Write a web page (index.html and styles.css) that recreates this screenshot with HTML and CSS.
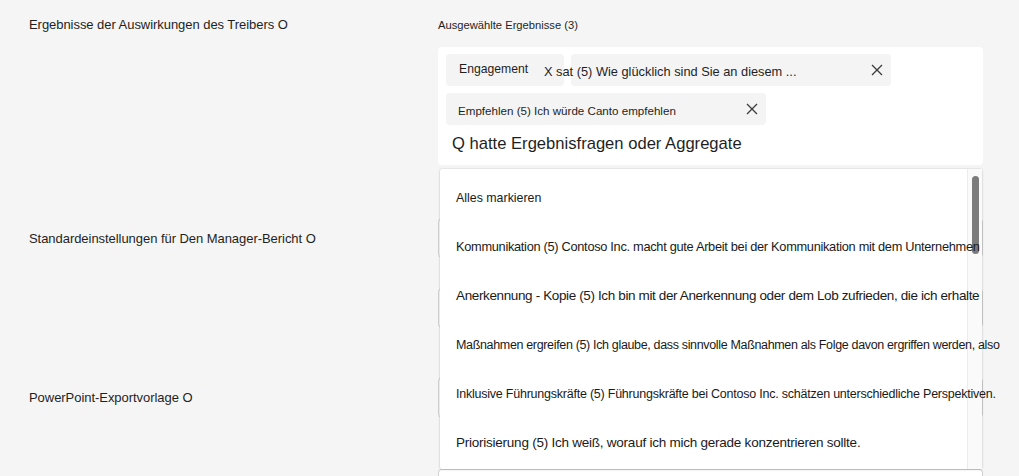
FILE: index.html
```html
<!DOCTYPE html>
<html lang="de">
<head>
<meta charset="utf-8">
<title>Einstellungen</title>
<link rel="stylesheet" href="styles.css">
</head>
<body>
<div class="page">
  <section class="row row-first">
    <div class="label label-top">Ergebnisse der Auswirkungen des Treibers O</div>
    <div class="control">
      <div class="small-label">Ausgewählte Ergebnisse (3)</div>
      <div class="combo">
        <div class="picker">
          <div class="chips">
            <div class="chip chip-short"><span class="chip-text">Engagement</span></div>
            <div class="chip chip-long">
              <span class="chip-text chip-text-shift">X sat (5) Wie glücklich sind Sie an diesem ...</span>
              <svg class="chip-x" viewBox="0 0 12 12" width="12" height="12"><path d="M1 1 L11 11 M11 1 L1 11"/></svg>
            </div>
            <div class="chip chip-mid">
              <span class="chip-text chip-text-small">Empfehlen (5) Ich würde Canto empfehlen</span>
              <svg class="chip-x" viewBox="0 0 12 12" width="12" height="12"><path d="M1 1 L11 11 M11 1 L1 11"/></svg>
            </div>
          </div>
          <div class="search">Q hatte Ergebnisfragen oder Aggregate</div>
        </div>
        <div class="dropdown">
          <div class="track"><div class="thumb"></div></div>
          <ul class="options">
            <li class="opt opt-a">Alles markieren</li>
            <li class="opt opt-b">Kommunikation (5) Contoso Inc. macht gute Arbeit bei der Kommunikation mit dem Unternehmen</li>
            <li class="opt opt-c">Anerkennung - Kopie (5) Ich bin mit der Anerkennung oder dem Lob zufrieden, die ich erhalte</li>
            <li class="opt opt-d">Maßnahmen ergreifen (5) Ich glaube, dass sinnvolle Maßnahmen als Folge davon ergriffen werden, also</li>
            <li class="opt opt-e">Inklusive Führungskräfte (5) Führungskräfte bei Contoso Inc. schätzen unterschiedliche Perspektiven.</li>
            <li class="opt opt-f">Priorisierung (5) Ich weiß, worauf ich mich gerade konzentrieren sollte.</li>
          </ul>
        </div>
      </div>
    </div>
  </section>

  <section class="row row-manager">
    <div class="label label-field">Standardeinstellungen für Den Manager-Bericht O</div>
    <div class="control fields">
      <div class="field"></div>
      <div class="field field-second"></div>
    </div>
  </section>

  <section class="row row-ppt">
    <div class="label label-field">PowerPoint-Exportvorlage O</div>
    <div class="control fields">
      <div class="field field-tall"></div>
    </div>
  </section>

  <section class="row row-last">
    <div class="label"></div>
    <div class="control fields">
      <div class="field field-cut"></div>
    </div>
  </section>
</div>
</body>
</html>
```

FILE: styles.css
```css
* { box-sizing: border-box; }

html, body {
  margin: 0;
  padding: 0;
  background: #f5f5f5;
  height: 100%;
  overflow: hidden;
}

body {
  font-family: "Liberation Sans", Arial, sans-serif;
  color: #1f1f1f;
}

.page {
  padding-left: 29px;
}

.row {
  display: flex;
  align-items: flex-start;
}

.label {
  width: 409px;
  flex: none;
  font-size: 13px;
  letter-spacing: -0.05px;
  line-height: 18px;
  color: #1f1f1f;
}

.control {
  width: 545px;
  flex: none;
}

/* first row */
.row-first {
  padding-top: 16px;
}

.small-label {
  font-size: 11.2px;
  line-height: 18px;
  margin-bottom: 13px;
}

.combo {
  position: relative;
}

.picker {
  background: #ffffff;
  border-radius: 4px;
  padding: 7px 7px 0 8px;
  height: 118px;
}

.chips {
  display: flex;
  flex-wrap: wrap;
  gap: 7px;
}

.chip {
  height: 32px;
  background: #f4f4f4;
  border-radius: 4px;
  display: flex;
  align-items: center;
  white-space: nowrap;
}

.chip-short {
  width: 118px;
  padding-left: 13px;
}

.chip-long {
  width: 320px;
  padding-right: 8px;
  justify-content: space-between;
}

.chip-mid {
  width: 320px;
  padding-left: 12px;
  padding-right: 8px;
  justify-content: space-between;
}

.chip-text {
  font-size: 12.2px;
  line-height: 16px;
  padding-bottom: 2px;
}

.chip-text-shift {
  font-size: 12.8px;
  margin-left: -27px;
  padding-bottom: 0;
  padding-top: 3px;
}

.chip-text-small {
  font-size: 11.6px;
  padding-top: 3px;
  padding-bottom: 0;
}

.chip-x {
  flex: none;
  fill: none;
  stroke: #3b3b3b;
  stroke-width: 1.3;
}

.search {
  height: 40px;
  display: flex;
  align-items: center;
  padding-left: 6px;
  font-size: 16.6px;
  padding-bottom: 2px;
}

.dropdown {
  position: absolute;
  top: calc(100% + 4px);
  left: 2px;
  width: 542px;
  height: 300px;
  background: #ffffff;
  border-radius: 2px;
  box-shadow: 0 0 2px rgba(0, 0, 0, 0.2), 0 1px 3px rgba(0, 0, 0, 0.08);
  z-index: 5;
}

.track {
  position: absolute;
  top: 0;
  right: 0;
  bottom: 0;
  width: 15px;
  background: #fafafa;
  border-left: 1px solid #ececec;
}

.thumb {
  margin: 7px 0 0 4px;
  width: 7px;
  height: 78px;
  border-radius: 4px;
  background: #7b7b7b;
}

.options {
  position: relative;
  list-style: none;
  margin: 0;
  padding: 4px 0 0 16px;
}

.opt {
  height: 49px;
  display: flex;
  align-items: center;
  white-space: nowrap;
  color: #1a1a1a;
}

.opt-a { font-size: 12.4px; }
.opt-b { font-size: 12.8px; letter-spacing: -0.3px; }
.opt-c { font-size: 13.5px; letter-spacing: -0.37px; }
.opt-d { font-size: 12.5px; letter-spacing: -0.34px; }
.opt-e { font-size: 12.5px; letter-spacing: -0.23px; }
.opt-f { font-size: 13.5px; letter-spacing: -0.24px; }

/* background fields */
.fields {
  display: flex;
  flex-direction: column;
  gap: 30px;
}

.field {
  height: 40px;
  background: #ffffff;
  border: 1px solid #d1d1d1;
  border-radius: 4px;
}

.field-tall {
  height: 41px;
}

.field-cut {
  height: 7px;
  border-bottom: none;
  border-radius: 4px 4px 0 0;
}

.label-field {
  padding-top: 12px;
}

.row-manager {
  margin-top: 53px;
}

.row-ppt {
  margin-top: 49px;
}

.row-last {
  margin-top: 51px;
}
```
